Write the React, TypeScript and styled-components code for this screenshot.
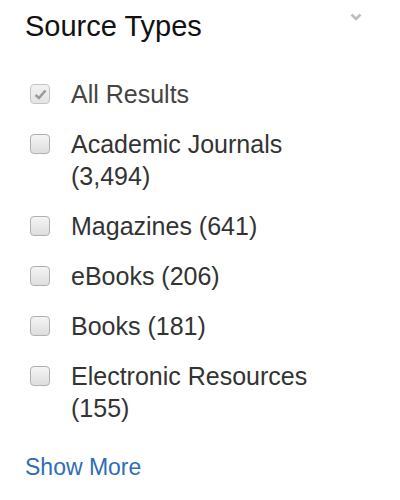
import styled, { createGlobalStyle } from "styled-components";

const GlobalStyle = createGlobalStyle`
  body {
    margin: 0;
    background: #fff;
    font-family: "Liberation Sans", Arial, sans-serif;
  }
`;

const Panel = styled.div`
  width: 400px;
  height: 500px;
  box-sizing: border-box;
  padding: 8px 38px 0 25px;
`;

const Header = styled.div`
  display: flex;
  justify-content: space-between;
  align-items: flex-start;
`;

const Title = styled.h2`
  margin: 0;
  font-size: 29px;
  line-height: 36px;
  font-weight: normal;
  color: #111;
`;

const Chevron = styled.svg`
  margin-top: 5px;
`;

const List = styled.ul`
  list-style: none;
  margin: 34px 0 0;
  padding: 0 0 0 5px;
  display: flex;
  flex-direction: column;
  gap: 18px;
`;

const Row = styled.li`
  display: flex;
  align-items: flex-start;
  gap: 21px;
`;

const Box = styled.span<{ $checked?: boolean }>`
  flex: none;
  box-sizing: border-box;
  width: 20px;
  height: 20px;
  margin-top: 6px;
  border: 1px solid ${(p) => (p.$checked ? "#c4c4c4" : "#b0b0b0")};
  border-radius: 4px;
  background: ${(p) =>
    p.$checked
      ? "linear-gradient(#f2f2f2, #e4e4e4)"
      : "linear-gradient(#f4f4f4, #dedede)"};
  display: flex;
  align-items: center;
  justify-content: center;
`;

const Label = styled.span<{ $muted?: boolean }>`
  max-width: 270px;
  font-size: 25px;
  line-height: 32px;
  color: ${(p) => (p.$muted ? "#444" : "#333")};
`;

const ShowMore = styled.a`
  display: block;
  margin-top: 29px;
  font-size: 23px;
  line-height: 28px;
  color: #2f6db5;
  text-decoration: none;
`;

const items = [
  "Academic Journals (3,494)",
  "Magazines (641)",
  "eBooks (206)",
  "Books (181)",
  "Electronic Resources (155)",
];

export default function App() {
  return (
    <>
      <GlobalStyle />
      <Panel>
        <Header>
          <Title>Source Types</Title>
          <Chevron width="12" height="8" viewBox="0 0 12 8">
            <path
              d="M1.5 1.5 L6 6 L10.5 1.5"
              fill="none"
              stroke="#bdbdbd"
              strokeWidth="2.6"
            />
          </Chevron>
        </Header>
        <List>
          <Row>
            <Box $checked>
              <svg width="13" height="11" viewBox="0 0 13 11">
                <path
                  d="M1.5 6 L5 9 L11.5 1.5"
                  fill="none"
                  stroke="#9a9a9a"
                  strokeWidth="2.6"
                />
              </svg>
            </Box>
            <Label $muted>All Results</Label>
          </Row>
          {items.map((t) => (
            <Row key={t}>
              <Box />
              <Label>{t}</Label>
            </Row>
          ))}
        </List>
        <ShowMore href="#">Show More</ShowMore>
      </Panel>
    </>
  );
}
